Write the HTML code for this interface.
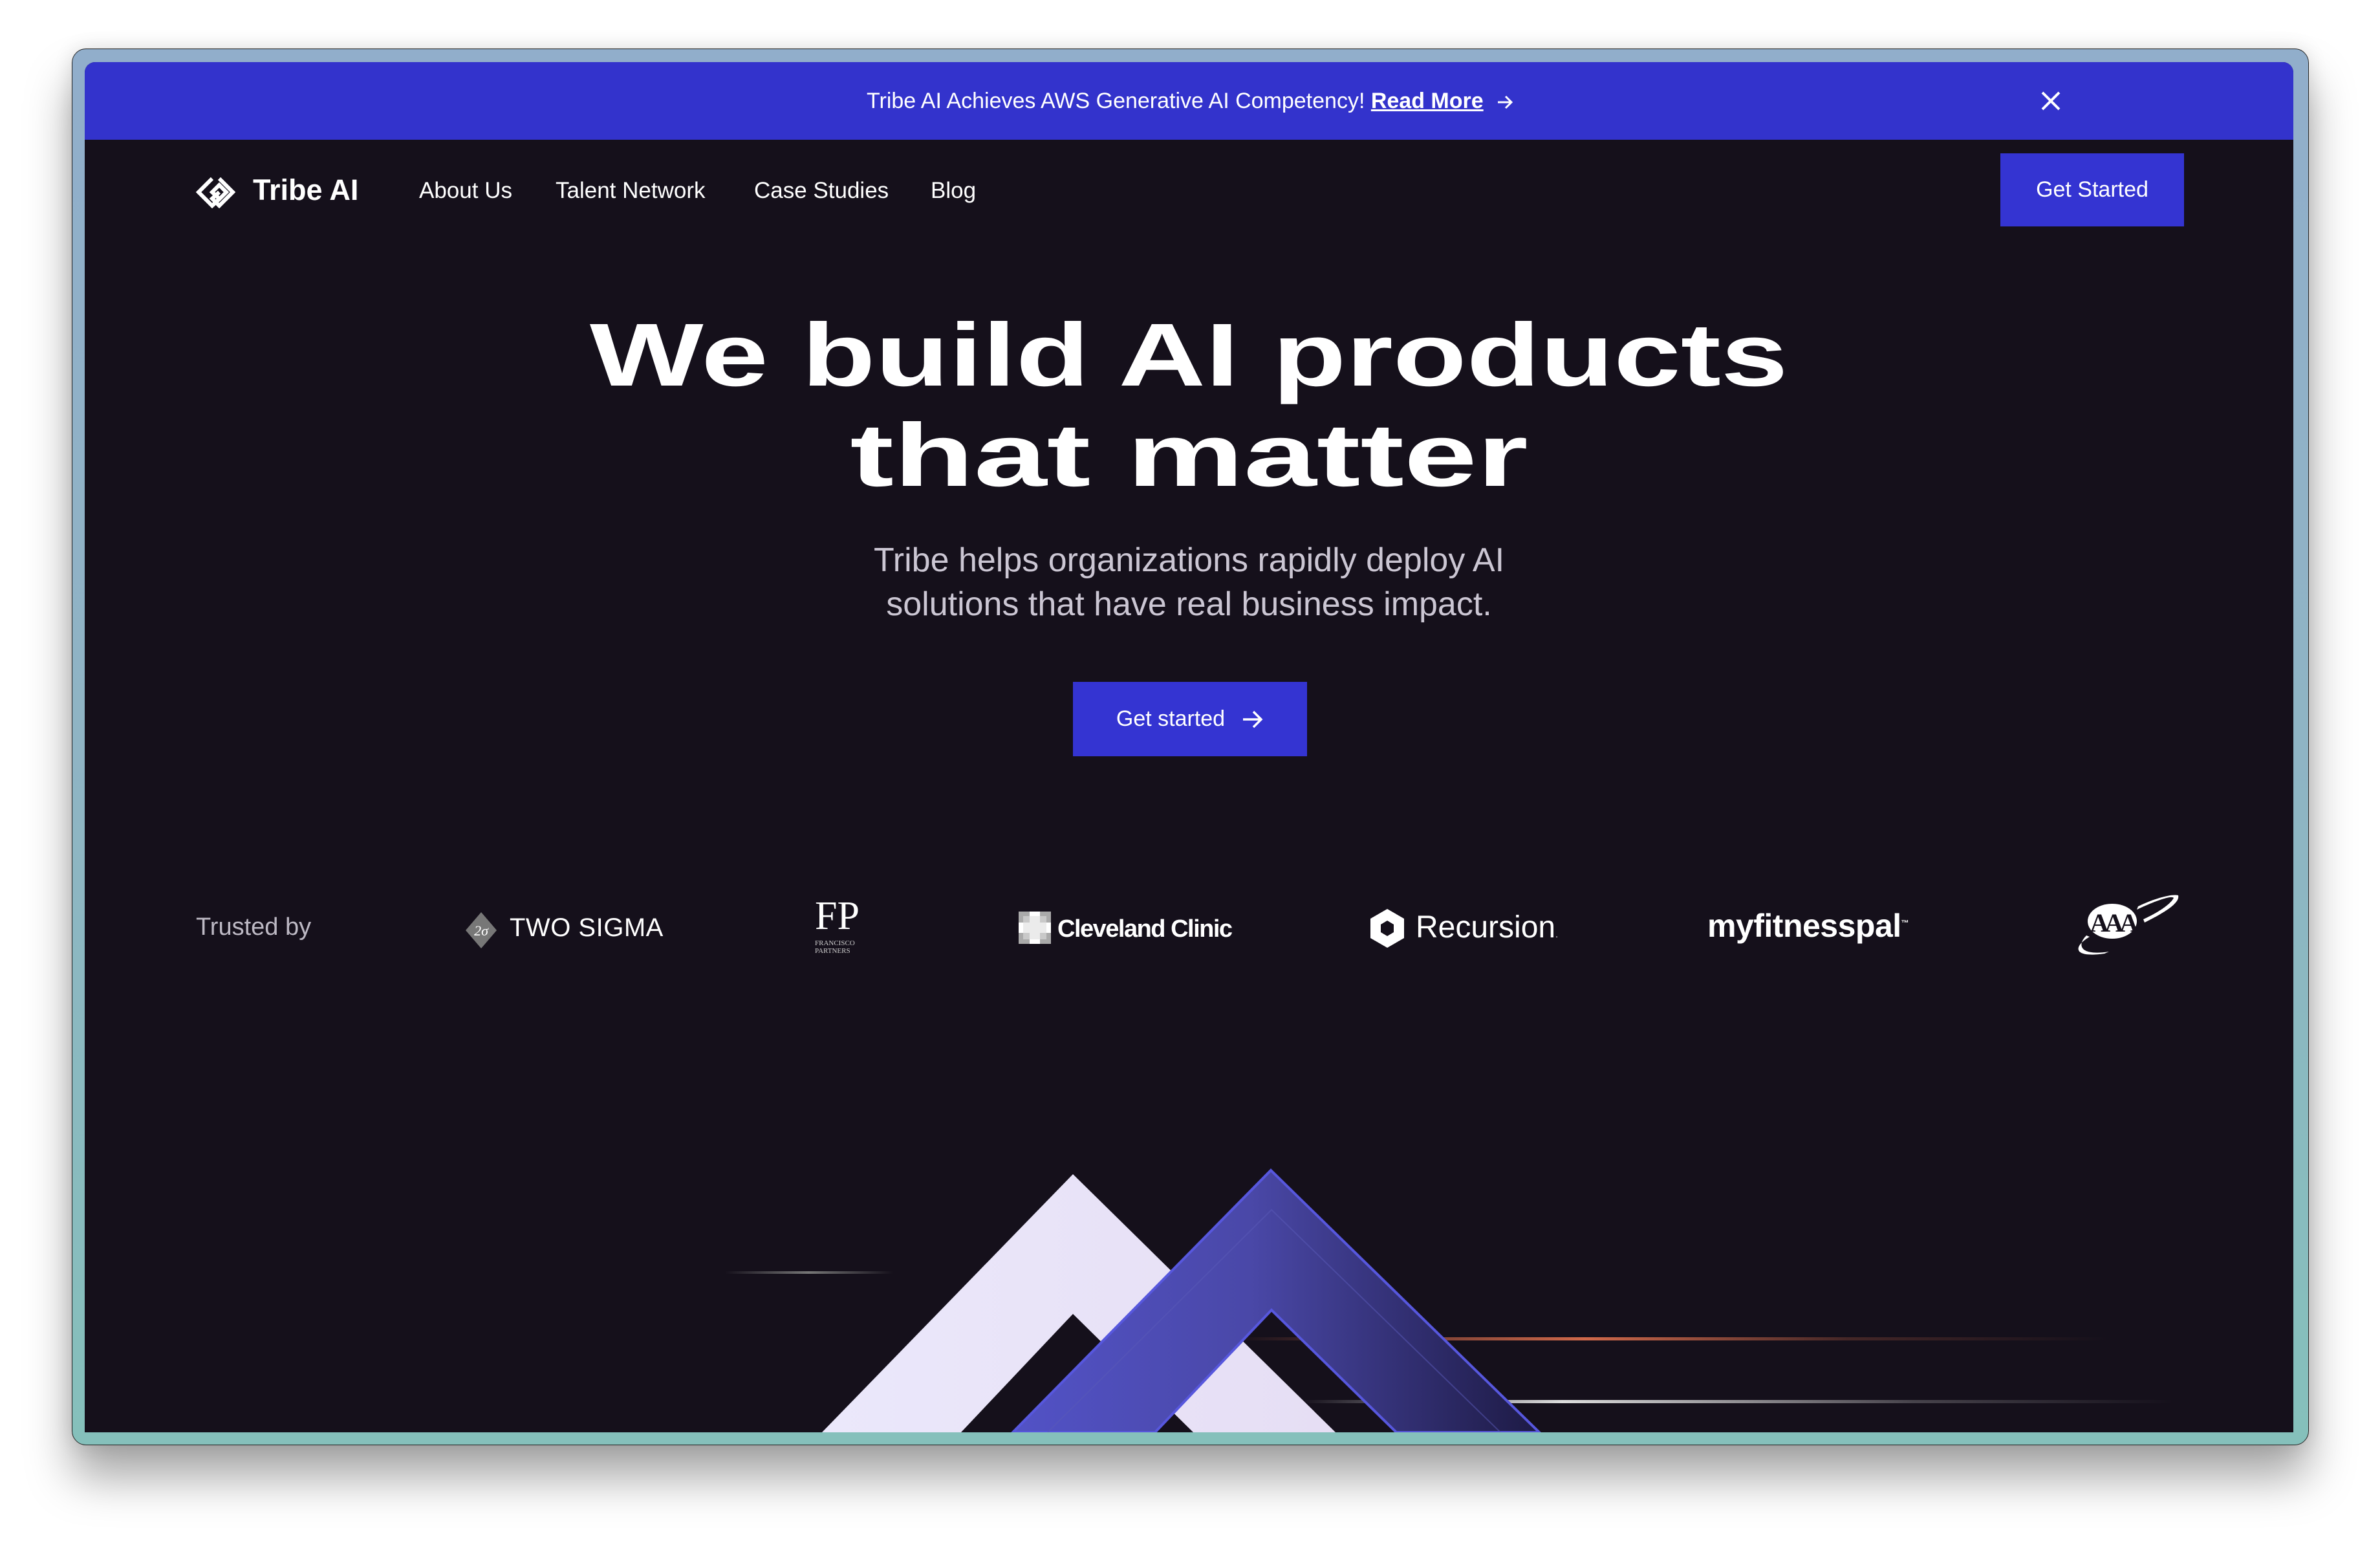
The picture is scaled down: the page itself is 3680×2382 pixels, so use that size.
<!DOCTYPE html>
<html><head><meta charset="utf-8"><style>
*{margin:0;padding:0;box-sizing:border-box}
html,body{width:3680px;height:2382px;background:#fff;overflow:hidden;font-family:"Liberation Sans",sans-serif}
.frame{position:absolute;left:111px;top:75px;width:3459px;height:2159px;border-radius:22px;background:linear-gradient(180deg,#91aecb 0%,#8fb4c4 50%,#85c0bb 100%);box-shadow:0 50px 70px rgba(0,0,0,.35),0 0 30px rgba(0,0,0,.12);border:1px solid #222}
.page{position:absolute;left:131px;top:96px;width:3415px;height:2118px;background:#15101b;overflow:hidden;border-radius:16px 16px 0 0}
.banner{position:absolute;left:0;top:0;width:100%;height:120px;background:#3333cc;color:#fff;font-size:34px}
.abs{position:absolute;white-space:nowrap}
.nav{color:#fff;font-size:35px;top:179px}
.btn{position:absolute;background:#3434d2;color:#fff;font-size:34px;display:flex;align-items:center;justify-content:center}
h1{position:absolute;left:0;width:100%;text-align:center;color:#fff;font-weight:bold;font-size:138px;line-height:155px;top:376px}
h1 span{display:inline-block;transform:scaleX(1.35)}
h1 span.l2{transform:scaleX(1.47)}
.sub{position:absolute;left:0;width:100%;text-align:center;color:#cbc6d3;font-size:52px;line-height:68px;top:736px}
.logo{position:absolute;color:#fff;white-space:nowrap}
</style></head><body>
<div class="frame"></div>
<div class="page">
  <div class="banner">
    <div class="abs" style="left:1209px;top:41px">Tribe AI Achieves AWS Generative AI Competency! <span style="text-decoration:underline;font-weight:bold">Read More</span></div>
    <svg class="abs" style="left:2182px;top:47px" width="28" height="30" viewBox="0 0 28 30"><path d="M3 15H24M15 6l9 9-9 9" stroke="#fff" stroke-width="3" fill="none"/></svg>
    <svg class="abs" style="left:3024px;top:44px" width="32" height="32" viewBox="0 0 32 32"><path d="M3 3L29 29M29 3L3 29" stroke="#fff" stroke-width="4"/></svg>
  </div>
  <svg class="abs" style="left:172px;top:176px" width="68" height="50" viewBox="0 0 68 50"><path d="M25 4L4 25 25 46 36 35 25 25 36 14 47 25 36 36 25 46M36 4L57 25 36 46 25 35 36 25" stroke="#fff" stroke-width="6" fill="none" stroke-linejoin="miter"/></svg>
  <div class="abs" style="left:260px;top:172px;color:#fff;font-size:45px;font-weight:bold">Tribe AI</div>
  <div class="abs nav" style="left:517px">About Us</div>
  <div class="abs nav" style="left:728px">Talent Network</div>
  <div class="abs nav" style="left:1035px">Case Studies</div>
  <div class="abs nav" style="left:1308px">Blog</div>
  <div class="btn" style="left:2962px;top:141px;width:284px;height:113px">Get Started</div>

  <h1><span>We build AI products</span><br><span class="l2">that matter</span></h1>
  <div class="sub">Tribe helps organizations rapidly deploy AI<br>solutions that have real business impact.</div>
  <div class="btn" style="left:1528px;top:958px;width:362px;height:115px;gap:26px">Get started <svg width="34" height="30" viewBox="0 0 34 30"><path d="M2 15H30M18 3l12 12-12 12" stroke="#fff" stroke-width="3.5" fill="none"/></svg></div>

  <div class="abs" style="left:172px;top:1316px;color:#bdb9c4;font-size:38px">Trusted by</div>
  <svg class="abs" style="left:587px;top:1312px" width="52" height="60" viewBox="0 0 52 60"><path d="M26 2L50 30 26 58 2 30Z" fill="#777"/><text x="26" y="38" font-size="22" fill="#fff" text-anchor="middle" font-style="italic" font-family="Liberation Serif">2σ</text></svg>
  <div class="logo" style="left:657px;top:1316px;font-size:40px;letter-spacing:0.5px">TWO SIGMA</div>
  <div class="logo" style="left:1129px;top:1290px;font-family:'Liberation Serif';font-size:62px;line-height:60px">FP</div>
  <div class="logo" style="left:1129px;top:1356px;font-family:'Liberation Serif';font-size:11px;line-height:12px;color:#ccc">FRANCISCO<br>PARTNERS</div>
  <svg class="abs" style="left:1444px;top:1313px" width="50" height="50" viewBox="0 0 50 50"><rect x="0" y="0" width="50" height="50" fill="#aaa"/><rect x="17" y="0" width="16" height="50" fill="#fff"/><rect x="0" y="17" width="50" height="16" fill="#fff"/><rect x="7" y="7" width="36" height="36" fill="#ddd" opacity=".6"/></svg>
  <div class="logo" style="left:1504px;top:1319px;font-size:38px;font-weight:bold;letter-spacing:-1.5px">Cleveland Clinic</div>
  <svg class="abs" style="left:1986px;top:1307px" width="56" height="64" viewBox="0 0 56 64"><path d="M28 2L54 17V47L28 62 2 47V17Z" fill="#fff"/><path d="M28 20L38 26V38L28 44 18 38V26Z" fill="#15101b"/></svg>
  <div class="logo" style="left:2058px;top:1310px;font-size:48px">Recursion<span style="font-size:14px">.</span></div>
  <div class="logo" style="left:2509px;top:1306px;font-size:50px;font-weight:bold;letter-spacing:-0.5px">myfitnesspal<sup style="font-size:12px">™</sup></div>
  <svg class="abs" style="left:3075px;top:1280px" width="170" height="105" viewBox="0 0 170 105"><ellipse cx="60" cy="48" rx="38" ry="27" fill="#fff"/><text x="60" y="64" font-size="40" font-weight="bold" font-family="Liberation Serif" fill="#15101b" text-anchor="middle" letter-spacing="-6">AAA</text><path d="M110 50C140 35 165 20 162 8 150 5 120 15 100 25L98 30C130 15 152 8 155 12 150 22 130 35 108 45Z" fill="#fff"/><path d="M20 70C5 85 10 102 55 95L48 98C0 105-2 88 25 72Z" fill="#fff"/></svg>

  <div class="abs" style="left:990px;top:1869px;width:260px;height:4px;background:linear-gradient(90deg,transparent,#777,transparent)"></div>
  <div class="abs" style="left:1780px;top:1971px;width:1350px;height:5px;background:linear-gradient(90deg,transparent,#d0694a 40%,rgba(208,105,74,.25) 70%,transparent)"></div>
  <div class="abs" style="left:1880px;top:2068px;width:1350px;height:5px;background:linear-gradient(90deg,transparent,#ddd 30%,rgba(220,220,220,.25) 70%,transparent)"></div>

  <svg class="abs" style="left:0;top:0" width="3415" height="2118" viewBox="131 96 3415 2118">
    <defs>
      <linearGradient id="bl" x1="0" x2="1" y1="0" y2="0"><stop offset="0" stop-color="#5252c6"/><stop offset=".45" stop-color="#4a48a8"/><stop offset="1" stop-color="#1d1a44"/></linearGradient>
      <linearGradient id="wh" x1="0" x2="1"><stop offset="0" stop-color="#ebe8fb"/><stop offset="1" stop-color="#e6def4"/></linearGradient>
    </defs>
    <path d="M1271 2214L1659 1815 2065 2214H1845L1659 2031 1486 2214Z" fill="url(#wh)"/>
    <path d="M1566 2214L1965 1809 2380 2214H2159L1966 2025 1786 2214Z" fill="url(#bl)" stroke="#5757dd" stroke-width="4"/>
    <path d="M1620 2214L1966 1870 2320 2214" fill="none" stroke="#5a5ab8" stroke-width="2" opacity=".5"/>
  </svg>
</div>
</body></html>
